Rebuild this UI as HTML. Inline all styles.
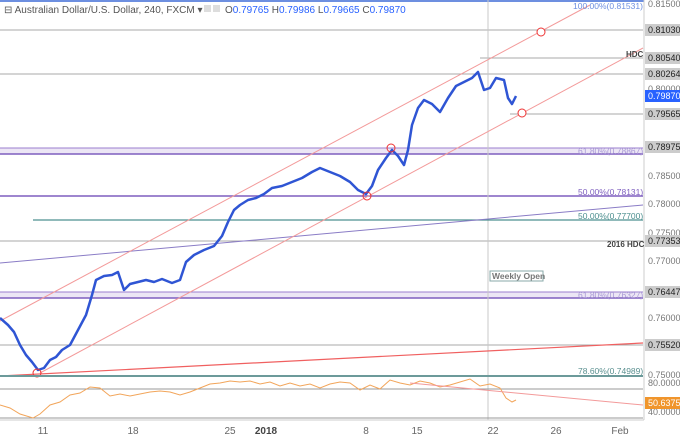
<!DOCTYPE html>
<html><head><meta charset="utf-8"><style>
body{margin:0;width:680px;height:436px;overflow:hidden;background:#fff;font-family:"Liberation Sans",sans-serif}
svg{display:block}
text{font-family:"Liberation Sans",sans-serif}
</style></head><body>
<svg width="680" height="436" viewBox="0 0 680 436">
<rect width="680" height="436" fill="#fff"/>
<rect x="0" y="0" width="644" height="2" fill="#6d8fe0"/>
<rect x="0" y="148" width="643" height="6" fill="#ece6f5"/>
<line x1="0" y1="148" x2="643" y2="148" stroke="#9b7fcf" stroke-width="1"/>
<line x1="0" y1="154" x2="643" y2="154" stroke="#7e5fbf" stroke-width="1.5"/>
<line x1="0" y1="196" x2="643" y2="196" stroke="#7e5fbf" stroke-width="1.5"/>
<rect x="0" y="292" width="643" height="6" fill="#ece6f5"/>
<line x1="0" y1="292" x2="643" y2="292" stroke="#9b7fcf" stroke-width="1"/>
<line x1="0" y1="298" x2="643" y2="298" stroke="#7e5fbf" stroke-width="1.5"/>
<g stroke="#a8a8a8" stroke-width="1">
<line x1="0" y1="30" x2="643" y2="30"/>
<line x1="480" y1="58" x2="643" y2="58"/>
<line x1="0" y1="74" x2="643" y2="74"/>
<line x1="510" y1="114" x2="643" y2="114"/>
<line x1="0" y1="241" x2="643" y2="241"/>
<line x1="0" y1="345" x2="643" y2="345"/>
<line x1="488" y1="0" x2="488" y2="420" stroke="#c8c8c8"/>
</g>
<line x1="33" y1="220" x2="643" y2="220" stroke="#4d9090" stroke-width="1.2"/>
<line x1="0" y1="263" x2="643" y2="205" stroke="#8a7cc6" stroke-width="1"/>
<line x1="0" y1="376" x2="643" y2="343" stroke="#f06060" stroke-width="1.2"/>
<line x1="0" y1="321" x2="590" y2="5" stroke="#f39a9a" stroke-width="1"/>
<line x1="40" y1="373" x2="643" y2="48" stroke="#f39a9a" stroke-width="1"/>
<polyline fill="none" stroke="#2f55d4" stroke-width="2.5" stroke-linejoin="round" points="0,318 8,325 14,332 20,345 26,355 32,362 38,370 44,368 50,360 56,357 62,350 70,345 78,330 86,315 92,295 96,280 104,276 112,275 118,272 124,290 130,284 138,282 146,280 154,282 162,279 172,283 180,280 186,262 194,255 204,250 214,246 222,236 228,222 234,210 240,205 248,200 256,198 264,194 272,188 282,186 292,182 302,178 312,172 320,168 330,172 340,176 350,182 358,190 366,194 372,186 378,170 386,158 392,150 398,156 404,165 408,150 412,125 418,108 424,100 432,104 440,112 448,98 456,86 464,82 472,78 478,72 484,90 490,88 496,78 504,80 508,98 512,104 516,96"/>
<circle cx="37" cy="373" r="4" fill="none" stroke="#e33" stroke-width="1"/>
<circle cx="367" cy="196" r="4" fill="none" stroke="#e33" stroke-width="1"/>
<circle cx="391" cy="148" r="4" fill="none" stroke="#e33" stroke-width="1"/>
<circle cx="522" cy="113" r="4" fill="#fff" stroke="#e33" stroke-width="1"/>
<circle cx="541" cy="32" r="4" fill="#fff" stroke="#e33" stroke-width="1"/>
<rect x="0" y="375" width="643" height="2" fill="#6c9a9a"/>
<line x1="0" y1="389" x2="643" y2="389" stroke="#999"/>
<line x1="0" y1="418" x2="643" y2="418" stroke="#999"/>
<polyline fill="none" stroke="#f2a55a" stroke-width="1" points="0,405 10,408 20,414 33,418 40,414 50,405 60,402 70,395 80,393 90,387 100,388 110,396 120,394 130,396 140,394 150,392 160,391 170,392 180,395 190,392 200,388 210,384 220,383 230,381 240,382 250,381 260,384 270,382 280,386 290,383 300,386 310,384 320,388 330,384 340,382 350,383 360,390 370,385 380,389 390,380 400,383 410,385 420,381 430,383 440,387 450,385 460,382 470,379 480,386 490,384 500,388 506,398 512,402 516,400"/>
<line x1="410" y1="383" x2="643" y2="405" stroke="#f39a9a" stroke-width="1"/>
<line x1="644" y1="0" x2="644" y2="420" stroke="#ccc"/>
<line x1="0" y1="420" x2="644" y2="420" stroke="#ccc"/>
<g font-size="9" fill="#777">
<text x="648" y="7">0.81500</text>
<text x="648" y="92">0.80000</text>
<text x="648" y="179">0.78500</text>
<text x="648" y="207">0.78000</text>
<text x="648" y="236">0.77500</text>
<text x="648" y="264">0.77000</text>
<text x="648" y="321">0.76000</text>
<text x="648" y="378">0.75000</text>
<text x="648" y="386">80.0000</text>
<text x="648" y="415">40.0000</text>
</g>
<g font-size="9" fill="#222">
<rect x="645" y="24" width="35" height="12" fill="#ccc"/><text x="648" y="33">0.81030</text>
<rect x="645" y="52" width="35" height="12" fill="#ccc"/><text x="648" y="61">0.80540</text>
<rect x="645" y="68" width="35" height="12" fill="#ccc"/><text x="648" y="77">0.80264</text>
<rect x="645" y="108" width="35" height="12" fill="#ccc"/><text x="648" y="117">0.79565</text>
<rect x="645" y="141" width="35" height="12" fill="#ccc"/><text x="648" y="150">0.78975</text>
<rect x="645" y="235" width="35" height="12" fill="#ccc"/><text x="648" y="244">0.77353</text>
<rect x="645" y="286" width="35" height="12" fill="#ccc"/><text x="648" y="295">0.76447</text>
<rect x="645" y="339" width="35" height="12" fill="#ccc"/><text x="648" y="348">0.75520</text>
</g>
<rect x="645" y="90" width="35" height="12" fill="#2962ff"/><text x="648" y="99" font-size="9" fill="#fff">0.79870</text>
<rect x="645" y="397" width="35" height="12" fill="#f0952c"/><text x="648" y="406" font-size="9" fill="#fff">50.6375</text>
<g font-size="8.5">
<text x="573" y="9" fill="#6d8fe0">100.00%(0.81531)</text>
<text x="578" y="154" fill="#a99ad6">61.80%(0.78867)</text>
<text x="578" y="195" fill="#7e5fbf">50.00%(0.78131)</text>
<text x="578" y="219" fill="#4d9090">50.00%(0.77700)</text>
<text x="578" y="298" fill="#a99ad6">61.80%(0.76327)</text>
<text x="578" y="374" fill="#5a9090">78.60%(0.74989)</text>
</g>
<text x="626" y="57" font-size="8" font-weight="bold" fill="#444">HDC</text>
<text x="607" y="247" font-size="8" font-weight="bold" fill="#444">2016 HDC</text>
<rect x="490" y="271" width="53" height="10" fill="#fff" stroke="#8aa"/>
<text x="492" y="279" font-size="8.5" font-weight="bold" fill="#777">Weekly Open</text>
<g font-size="10" fill="#666" text-anchor="middle">
<text x="43" y="434">11</text><text x="133" y="434">18</text><text x="230" y="434">25</text>
<text x="266" y="434" font-weight="bold" fill="#444">2018</text><text x="366" y="434">8</text>
<text x="417" y="434">15</text><text x="493" y="434">22</text><text x="556" y="434">26</text><text x="620" y="434">Feb</text>
</g>
<text x="4" y="13" font-size="10" fill="#555">⊟ Australian Dollar/U.S. Dollar, 240, FXCM ▾</text>
<rect x="204" y="5" width="7" height="7" fill="#ddd"/><rect x="213" y="5" width="7" height="7" fill="#ddd"/>
<text x="225" y="13" font-size="10" fill="#555">O<tspan fill="#2962ff">0.79765</tspan> H<tspan fill="#2962ff">0.79986</tspan> L<tspan fill="#2962ff">0.79665</tspan> C<tspan fill="#2962ff">0.79870</tspan></text>
</svg>
</body></html>
